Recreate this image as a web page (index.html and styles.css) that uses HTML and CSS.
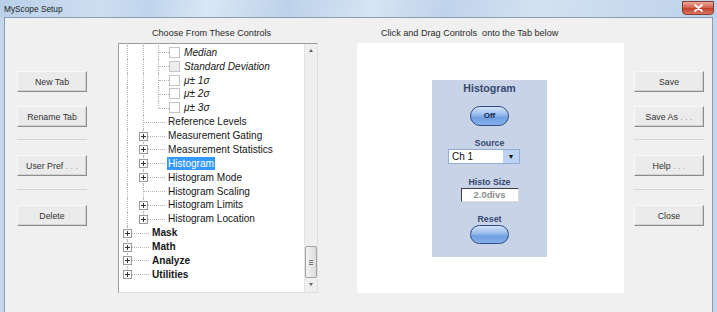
FILE: index.html
```html
<!DOCTYPE html>
<html lang="en">
<head>
  <meta charset="UTF-8" />
  <title>MyScope Setup</title>
  <link rel="stylesheet" href="styles.css">
</head>
<body>
  <div class="window">
    <div class="titlebar">
      <span class="title">MyScope Setup</span>
      <span class="close" aria-label="Close">
        <svg width="9" height="8" viewBox="0 0 9 8"><path d="M1 1 L8 7 M8 1 L1 7" stroke="#fff" stroke-width="1.8" stroke-linecap="round"/></svg>
      </span>
    </div>

    <div class="client">
      <div class="col-side">
        <button class="btn">New Tab</button>
        <button class="btn gap-s">Rename Tab</button>
        <div class="sep"></div>
        <button class="btn gap-l">User Pref <span class="dots">. . .</span></button>
        <div class="sep sep2"></div>
        <button class="btn gap-l">Delete</button>
      </div>

      <div class="col-tree">
        <div class="heading">Choose From These Controls</div>
        <div class="treebox">
          <div class="tree">
            <div class="row"><i class="g"></i><i class="g"></i><i class="br br2"></i><span class="chk"></span><span class="lbl it">Median</span></div>
            <div class="row"><i class="g"></i><i class="g"></i><i class="br br2"></i><span class="chk grey"></span><span class="lbl it">Standard Deviation</span></div>
            <div class="row"><i class="g"></i><i class="g"></i><i class="br br2"></i><span class="chk"></span><span class="lbl it">μ± 1σ</span></div>
            <div class="row"><i class="g"></i><i class="g"></i><i class="br br2"></i><span class="chk"></span><span class="lbl it">μ± 2σ</span></div>
            <div class="row"><i class="g"></i><i class="g"></i><i class="br br2 last"></i><span class="chk"></span><span class="lbl it">μ± 3σ</span></div>
            <div class="row"><i class="g"></i><i class="br br1"></i><span class="lbl">Reference Levels</span></div>
            <div class="row"><i class="g"></i><i class="br br1"><b class="plus"></b></i><span class="lbl">Measurement Gating</span></div>
            <div class="row"><i class="g"></i><i class="br br1"><b class="plus"></b></i><span class="lbl">Measurement Statistics</span></div>
            <div class="row"><i class="g"></i><i class="br br1"><b class="plus"></b></i><span class="lbl sel">Histogram</span></div>
            <div class="row"><i class="g"></i><i class="br br1"><b class="plus"></b></i><span class="lbl">Histogram Mode</span></div>
            <div class="row"><i class="g"></i><i class="br br1"></i><span class="lbl">Histogram Scaling</span></div>
            <div class="row"><i class="g"></i><i class="br br1"><b class="plus"></b></i><span class="lbl">Histogram Limits</span></div>
            <div class="row"><i class="g"></i><i class="br br1 last"><b class="plus"></b></i><span class="lbl">Histogram Location</span></div>
            <div class="row"><i class="br br0"><b class="plus"></b></i><span class="lbl bold">Mask</span></div>
            <div class="row"><i class="br br0"><b class="plus"></b></i><span class="lbl bold">Math</span></div>
            <div class="row"><i class="br br0"><b class="plus"></b></i><span class="lbl bold">Analyze</span></div>
            <div class="row"><i class="br br0 last"><b class="plus"></b></i><span class="lbl bold">Utilities</span></div>
          </div>
          <div class="scrollbar">
            <div class="arrow up"></div>
            <div class="track"></div>
            <div class="thumb"><span></span><span></span><span></span></div>
            <div class="arrow down"></div>
          </div>
        </div>
      </div>

      <div class="col-canvas">
        <div class="heading">Click and Drag Controls&nbsp; onto the Tab below</div>
        <div class="canvas">
          <div class="panel">
            <div class="panel-title">Histogram</div>
            <div class="pill pill-off">Off</div>
            <div class="plabel">Source</div>
            <div class="select">
              <span class="select-text">Ch 1</span>
              <span class="select-arrow">▼</span>
            </div>
            <div class="plabel plabel-size">Histo Size</div>
            <div class="field">2.0divs</div>
            <div class="plabel">Reset</div>
            <div class="pill pill-reset"></div>
          </div>
        </div>
      </div>

      <div class="col-side col-right">
        <button class="btn">Save</button>
        <button class="btn gap-s">Save As <span class="dots">. . .</span></button>
        <div class="sep"></div>
        <button class="btn gap-l">Help <span class="dots">. . .</span></button>
        <div class="sep sep2"></div>
        <button class="btn gap-l">Close</button>
      </div>
    </div>
  </div>
</body>
</html>
```

FILE: styles.css
```css
body {
  margin: 0;
  background: #c4d7ed;
  font-family: "Liberation Sans", Arial, sans-serif;
}

.window {
  width: 717px;
  height: 312px;
  overflow: hidden;
  display: flex;
  flex-direction: column;
}

/* title bar */
.titlebar {
  height: 17px;
  flex: none;
  display: flex;
  justify-content: space-between;
  align-items: flex-start;
  padding: 0 3px 0 4px;
  background: linear-gradient(100deg, #b9cfe9 0%, #cddef1 14%, #bfd4ec 21%, #d9e7f5 29%, #bdd2ea 40%, #d6e4f3 52%, #bfd3eb 62%, #d3e2f2 75%, #bcd1ea 100%);
}

.title {
  font-size: 8.3px;
  line-height: 18px;
  color: #1e1e1e;
}

.close {
  width: 30px;
  height: 12px;
  margin-top: 1px;
  border: 1px solid #8b3a2e;
  border-radius: 0 0 4px 4px;
  background: linear-gradient(#eaa899, #d3604c 48%, #c23f29 52%, #d77663);
  display: flex;
  align-items: center;
  justify-content: center;
}

/* client area */
.client {
  flex: 1;
  margin: 0 4px;
  border: 1px solid #8a9db5;
  border-bottom: none;
  background: #f0f0f0;
  display: flex;
}

.col-side {
  width: 113px;
  flex: none;
  box-sizing: border-box;
  padding: 53px 0 0 12px;
  display: flex;
  flex-direction: column;
  align-items: flex-start;
}

.col-right {
  width: auto;
  flex: 1;
  padding-left: 10px;
}

.btn {
  width: 70px;
  height: 21px;
  box-sizing: border-box;
  padding: 0;
  background: #ebebeb;
  border: 1px solid;
  border-color: #f9f9f9 #8c8c8c #8c8c8c #f9f9f9;
  box-shadow: inset -1px -1px 0 #d2d2d2;
  font-family: "Liberation Sans", Arial, sans-serif;
  font-size: 8.8px;
  color: #333;
}

.btn .dots {
  color: #a0a0a0;
}

.gap-s { margin-top: 14px; }
.gap-l { margin-top: 15px; }

.sep {
  width: 70px;
  height: 1px;
  margin-top: 12px;
  background: #d6d6d6;
}

.sep2 { margin-top: 13px; }

.heading {
  height: 25px;
  box-sizing: border-box;
  padding-top: 9px;
  line-height: 12px;
  font-size: 9.1px;
  color: #2a2a2a;
  white-space: nowrap;
}

/* tree */
.col-tree {
  width: 200px;
  flex: none;
}

.col-tree .heading { padding-left: 34px; }

.treebox {
  height: 250px;
  box-sizing: border-box;
  background: #fff;
  border: 1px solid;
  border-color: #9c9c9c #dedede #dedede #9c9c9c;
  display: flex;
}

.tree {
  flex: 1;
  padding: 1.4px 0 0 8px;
  font-size: 10.1px;
  color: #161616;
}

.row {
  height: 13.875px;
  display: flex;
  align-items: center;
  white-space: nowrap;
}

.g, .br {
  align-self: stretch;
  flex: none;
  position: relative;
}

.g { width: 15.5px; }

.g::before, .br::before {
  content: "";
  position: absolute;
  left: 0;
  top: 0;
  bottom: 0;
  border-left: 1px dotted #b5b5b5;
}

.br.last::before { bottom: 50%; }

.br::after {
  content: "";
  position: absolute;
  left: 1px;
  right: 3px;
  top: 50%;
  border-top: 1px dotted #b5b5b5;
}

.br0 { width: 25px; }
.br1 { width: 25.5px; }
.br2 { width: 10.5px; }
.br2::after { right: 0; }

.plus {
  position: absolute;
  left: -4px;
  top: 50%;
  margin-top: -4px;
  width: 9px;
  height: 9px;
  box-sizing: border-box;
  border: 1px solid #9a9a9a;
  background: #fff;
  z-index: 1;
}

.plus::before, .plus::after {
  content: "";
  position: absolute;
  background: #333;
}

.plus::before { left: 1px; right: 1px; top: 3px; height: 1px; }
.plus::after { top: 1px; bottom: 1px; left: 3px; width: 1px; }

.chk {
  width: 11px;
  height: 11px;
  box-sizing: border-box;
  flex: none;
  margin-right: 4.5px;
  border: 1px solid #c4c4c4;
  background: #fff;
}

.chk.grey { background: #ededed; }

.lbl { line-height: 13px; }
.lbl.it { font-style: italic; }
.lbl.bold { font-weight: bold; }

.lbl.sel {
  margin-left: -1px;
  padding: 0 1px;
  background: #3399ff;
  color: #fff;
}

.scrollbar {
  width: 12px;
  flex: none;
  background: #efefef;
  border-left: 1px solid #e4e4e4;
  display: flex;
  flex-direction: column;
}

.arrow {
  height: 14px;
  flex: none;
  position: relative;
}

.arrow::before {
  content: "";
  position: absolute;
  left: 4px;
  top: 5px;
  border-left: 2px solid transparent;
  border-right: 2px solid transparent;
}

.arrow.up::before { border-bottom: 3px solid #666; }
.arrow.down::before { border-top: 3px solid #666; }

.track { flex: 1; }

.thumb {
  height: 32px;
  flex: none;
  box-sizing: border-box;
  border: 1px solid #a4a4a4;
  border-radius: 2px;
  background: linear-gradient(90deg, #f3f3f3, #dcdcdc);
  display: flex;
  flex-direction: column;
  align-items: center;
  justify-content: center;
  gap: 1px;
}

.thumb span {
  width: 4px;
  height: 1px;
  background: #777;
}

/* canvas */
.col-canvas {
  width: 267px;
  flex: none;
  margin-left: 39px;
}

.col-canvas .heading { padding-left: 24px; }

.canvas {
  height: 250px;
  background: #fff;
  padding: 37px 0 0 75px;
  box-sizing: border-box;
}

.panel {
  width: 115px;
  height: 177px;
  box-sizing: border-box;
  padding-top: 1px;
  background: #c9d3e8;
  display: flex;
  flex-direction: column;
  align-items: center;
  color: #36496f;
  font-weight: bold;
}

.panel-title {
  font-size: 10.6px;
  line-height: 14px;
}

.pill {
  width: 39px;
  height: 20px;
  box-sizing: border-box;
  border: 1px solid #2e4d82;
  border-radius: 10px;
  background: linear-gradient(#d2e3f9, #9dc0ef 40%, #6f9fe2 60%, #86b0ea);
  font-size: 8px;
  line-height: 18px;
  text-align: center;
  color: #16284a;
}

.pill-off { margin-top: 11px; }
.pill-reset { height: 19px; }

.plabel {
  font-size: 8.8px;
  line-height: 11px;
  margin-top: 11.5px;
}

.plabel-size { margin-top: 13.5px; }

.select {
  align-self: flex-start;
  margin-left: 16px;
  width: 72px;
  height: 15px;
  box-sizing: border-box;
  border: 1px solid #93acd6;
  background: #fff;
  display: flex;
  font-weight: normal;
}

.select-text {
  flex: 1;
  padding-left: 3px;
  font-size: 10px;
  line-height: 13px;
  color: #111;
}

.select-arrow {
  width: 16px;
  background: #bcd2f3;
  font-size: 7px;
  line-height: 13px;
  text-align: center;
  color: #111;
}

.field {
  width: 58px;
  height: 14px;
  box-sizing: border-box;
  border: 1px solid;
  border-color: #3f3f3f #dadada #dadada #3f3f3f;
  background: #fff;
  font-size: 9.4px;
  line-height: 12px;
  text-align: center;
  color: #8d8d8d;
}
```
